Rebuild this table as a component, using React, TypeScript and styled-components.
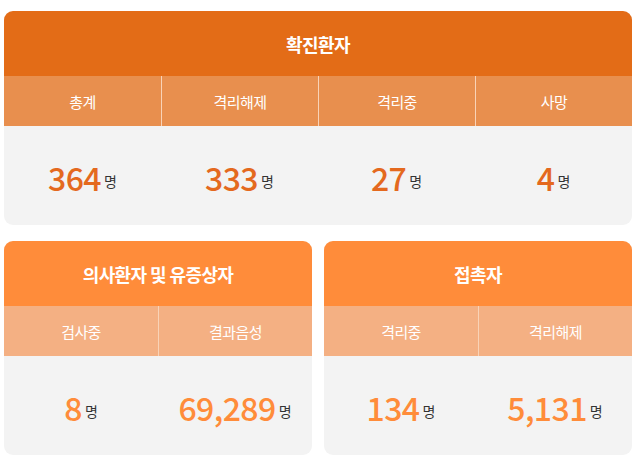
import React from "react";
import styled, { createGlobalStyle } from "styled-components";

const Global = createGlobalStyle`
  html, body { margin: 0; padding: 0; background: #ffffff; }
  body { font-family: "Noto Sans CJK KR", "Noto Sans", sans-serif; }
`;

type Tone = "dark" | "light";

const palette = {
  dark: { head: "#E36C17", sub: "#E88F4E", num: "#E4691E", line: "#F2B489" },
  light: { head: "#FF8C3A", sub: "#F4B083", num: "#FF8C3A", line: "#F9D3B7" },
};

const Page = styled.div`
  width: 637px;
  padding: 11px 5px 0 4px;
  box-sizing: border-box;
  display: flex;
  flex-direction: column;
  gap: 16px;
`;

const Row = styled.div`
  display: flex;
  gap: 12px;
`;

const Card = styled.section`
  flex: 1;
  border-radius: 9px;
  overflow: hidden;
  background: #f3f3f3;
  display: flex;
  flex-direction: column;
`;

const Title = styled.div<{ $tone: Tone }>`
  height: 65px;
  background: ${(p) => palette[p.$tone].head};
  color: #fff;
  font-size: 18px;
  font-weight: 700;
  letter-spacing: -0.6px;
  display: flex;
  align-items: center;
  justify-content: center;
`;

const Grid = styled.div<{ $cols: number }>`
  display: grid;
  grid-template-columns: repeat(${(p) => p.$cols}, 1fr);
`;

const Label = styled.div<{ $tone: Tone }>`
  height: 50px;
  background: ${(p) => palette[p.$tone].sub};
  color: #fff;
  font-size: 15px;
  font-weight: 400;
  letter-spacing: -0.6px;
  display: flex;
  align-items: center;
  justify-content: center;
  box-sizing: border-box;
  & + & { border-left: 1px solid ${(p) => palette[p.$tone].line}; }
`;

const Cell = styled.div`
  height: 99px;
  display: flex;
  align-items: center;
  justify-content: center;
  padding-top: 2px;
  box-sizing: border-box;
`;

const Num = styled.span<{ $tone: Tone }>`
  color: ${(p) => palette[p.$tone].num};
  font-size: 32px;
  font-weight: 500;
  letter-spacing: -0.6px;
  line-height: 1;
`;

const Unit = styled.span`
  color: #333;
  font-size: 14px;
  margin-left: 3px;
  margin-top: 8px;
`;

type Item = { label: string; value: string };

function Block({ title, tone, items }: { title: string; tone: Tone; items: Item[] }) {
  return (
    <Card>
      <Title $tone={tone}>{title}</Title>
      <Grid $cols={items.length}>
        {items.map((it) => (
          <Label key={it.label} $tone={tone}>{it.label}</Label>
        ))}
      </Grid>
      <Grid $cols={items.length}>
        {items.map((it) => (
          <Cell key={it.label}>
            <Num $tone={tone}>{it.value}</Num>
            <Unit>명</Unit>
          </Cell>
        ))}
      </Grid>
    </Card>
  );
}

export default function App() {
  return (
    <>
      <Global />
      <Page>
        <Block
          title="확진환자"
          tone="dark"
          items={[
            { label: "총계", value: "364" },
            { label: "격리해제", value: "333" },
            { label: "격리중", value: "27" },
            { label: "사망", value: "4" },
          ]}
        />
        <Row>
          <Block
            title="의사환자 및 유증상자"
            tone="light"
            items={[
              { label: "검사중", value: "8" },
              { label: "결과음성", value: "69,289" },
            ]}
          />
          <Block
            title="접촉자"
            tone="light"
            items={[
              { label: "격리중", value: "134" },
              { label: "격리해제", value: "5,131" },
            ]}
          />
        </Row>
      </Page>
    </>
  );
}
